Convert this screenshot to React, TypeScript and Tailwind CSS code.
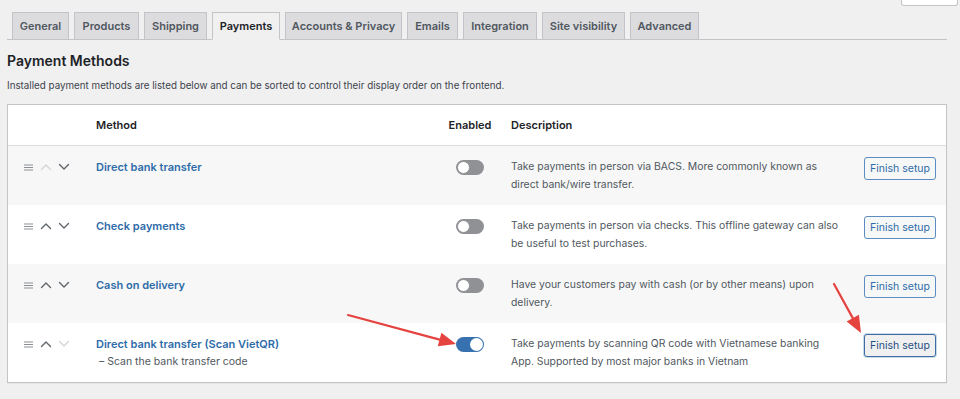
import { ReactNode } from 'react';

type Tab = { label: string; w: string; active?: boolean };

const tabs: Tab[] = [
  { label: 'General', w: 'w-[57px]' },
  { label: 'Products', w: 'w-[65px]' },
  { label: 'Shipping', w: 'w-[63px]' },
  { label: 'Payments', w: 'w-[68px]', active: true },
  { label: 'Accounts & Privacy', w: 'w-[117px]' },
  { label: 'Emails', w: 'w-[51px]' },
  { label: 'Integration', w: 'w-[74px]' },
  { label: 'Site visibility', w: 'w-[83px]' },
  { label: 'Advanced', w: 'w-[69px]' },
];

type Method = {
  name: string;
  sub?: string;
  desc: [string, string];
  enabled: boolean;
  canUp: boolean;
  canDown: boolean;
  focused?: boolean;
};

const methods: Method[] = [
  {
    name: 'Direct bank transfer',
    desc: ['Take payments in person via BACS. More commonly known as', 'direct bank/wire transfer.'],
    enabled: false,
    canUp: false,
    canDown: true,
  },
  {
    name: 'Check payments',
    desc: ['Take payments in person via checks. This offline gateway can also', 'be useful to test purchases.'],
    enabled: false,
    canUp: true,
    canDown: true,
  },
  {
    name: 'Cash on delivery',
    desc: ['Have your customers pay with cash (or by other means) upon', 'delivery.'],
    enabled: false,
    canUp: true,
    canDown: true,
  },
  {
    name: 'Direct bank transfer (Scan VietQR)',
    sub: '– Scan the bank transfer code',
    desc: ['Take payments by scanning QR code with Vietnamese banking', 'App. Supported by most major banks in Vietnam'],
    enabled: true,
    canUp: true,
    canDown: false,
    focused: true,
  },
];

const Chevron = ({ up, on }: { up?: boolean; on: boolean }) => (
  <svg width="12" height="8" viewBox="0 0 12 8" className={on ? 'text-[#5f656b]' : 'text-[#d3d4d7]'}>
    <path
      d={up ? 'M1.5 6.5 L6 2 L10.5 6.5' : 'M1.5 1.5 L6 6 L10.5 1.5'}
      fill="none"
      stroke="currentColor"
      strokeWidth="1.4"
      strokeLinecap="round"
      strokeLinejoin="round"
    />
  </svg>
);

const Handle = () => (
  <svg width="9" height="7" viewBox="0 0 9 7" className="text-[#8c8f94]">
    <path d="M0 1h9M0 3.5h9M0 6h9" stroke="currentColor" strokeWidth="1.2" />
  </svg>
);

const Toggle = ({ on }: { on: boolean }) => (
  <div
    className={`w-[28px] h-[15px] rounded-full flex items-center px-[1px] ${
      on ? 'bg-[#3871b0] justify-end' : 'bg-[#8f9195] justify-start'
    }`}
  >
    <div className={`w-[13px] h-[13px] rounded-full bg-white ${on ? '' : 'border border-[#8f9195]'}`} />
  </div>
);

const Cell = ({ children, className = '' }: { children?: ReactNode; className?: string }) => (
  <div className={className}>{children}</div>
);

const Arrow = ({ x1, y1, x2, y2 }: { x1: number; y1: number; x2: number; y2: number }) => {
  const a = Math.atan2(y2 - y1, x2 - x1);
  const len = 17;
  const half = 7;
  const bx = x2 - Math.cos(a) * len;
  const by = y2 - Math.sin(a) * len;
  const px = -Math.sin(a) * half;
  const py = Math.cos(a) * half;
  return (
    <g>
      <line x1={x1} y1={y1} x2={bx} y2={by} stroke="#e5433f" strokeWidth="2.2" strokeLinecap="round" />
      <polygon points={`${x2},${y2} ${bx + px},${by + py} ${bx - px},${by - py}`} fill="#e5433f" />
    </g>
  );
};

export default function App() {
  return (
    <div
      className="relative w-[960px] h-[399px] overflow-hidden bg-[#f0f0f1] text-[#3c434a]"
      style={{ fontFamily: 'Inter, "Liberation Sans", sans-serif' }}
    >
      {/* screen options stub */}
      <div className="h-[12px] flex justify-end pr-[2px]">
        <div className="w-[57px] h-[6px] bg-white border-x border-b border-[#c3c4c7] rounded-b-[3px]" />
      </div>

      {/* tabs */}
      <div className="mx-[7px] pl-[5px] flex gap-[5px] border-b border-[#c3c4c7] w-[940px]">
        {tabs.map((t) => (
          <div
            key={t.label}
            className={`${t.w} h-[28px] -mb-px flex items-center justify-center border border-[#c3c4c7] text-[11px] font-semibold ${
              t.active ? 'bg-[#f0f0f1] border-b-[#f0f0f1] text-[#1d2327]' : 'bg-[#dcdcde] text-[#50575e]'
            }`}
          >
            {t.label}
          </div>
        ))}
      </div>

      <div className="px-[7px]">
        <h2 className="mt-[12px] text-[14px] leading-[18px] font-semibold text-[#1d2327]">Payment Methods</h2>
        <p className="mt-[9px] text-[9.8px] leading-[14px] text-[#3c434a]">
          Installed payment methods are listed below and can be sorted to control their display order on the frontend.
        </p>

        {/* table */}
        <div className="mt-[11px] w-[940px] bg-white border border-[#c3c4c7] shadow-[0_1px_1px_rgba(0,0,0,0.04)]">
          <div className="grid grid-cols-[88px_344px_60px_352px_94px] h-[41px] items-center border-b border-[#dcdcde] text-[11px] font-semibold text-[#1d2327]">
            <Cell />
            <Cell>Method</Cell>
            <Cell className="text-center">Enabled</Cell>
            <Cell className="pl-[11px]">Description</Cell>
            <Cell />
          </div>

          {methods.map((m, i) => (
            <div
              key={m.name}
              className={`grid grid-cols-[88px_344px_60px_352px_94px] h-[59px] pt-[12px] items-start text-[11px] leading-[18px] ${
                i % 2 === 0 ? 'bg-[#f7f7f7]' : 'bg-white'
              }`}
            >
              <Cell className="pl-[16px] h-[18px] flex items-center gap-[7px]">
                <Handle />
                <div className="flex items-center gap-[6px]">
                  <Chevron up on={m.canUp} />
                  <Chevron on={m.canDown} />
                </div>
              </Cell>
              <Cell>
                <div className="font-semibold text-[#2e6ca9]">{m.name}</div>
                {m.sub && <div className="pl-[3px] text-[10.5px] text-[#50575e]">{m.sub}</div>}
              </Cell>
              <Cell className="h-[18px] flex items-center justify-center">
                <Toggle on={m.enabled} />
              </Cell>
              <Cell className="pl-[11px] text-[10.4px] text-[#50575e] whitespace-nowrap">
                {m.desc[0]}
                <br />
                {m.desc[1]}
              </Cell>
              <Cell className="flex justify-end pr-[10px] -mt-[1px]">
                <button
                  className={`w-[72px] h-[23px] rounded-[3px] border text-[10.5px] ${
                    m.focused
                      ? 'border-[#3f6da3] bg-[#f0f0f1] text-[#1f4f82] shadow-[0_0_0_1px_rgba(34,113,177,0.25)]'
                      : 'border-[#5d8cc2] bg-[#f6f7f7] text-[#2e6ca9]'
                  }`}
                >
                  Finish setup
                </button>
              </Cell>
            </div>
          ))}
        </div>
      </div>

      {/* annotation arrows */}
      <svg className="absolute inset-0 pointer-events-none" width="960" height="399">
        <Arrow x1={348} y1={315} x2={456} y2={344} />
        <Arrow x1={834} y1={284} x2={861} y2={333} />
      </svg>
    </div>
  );
}
